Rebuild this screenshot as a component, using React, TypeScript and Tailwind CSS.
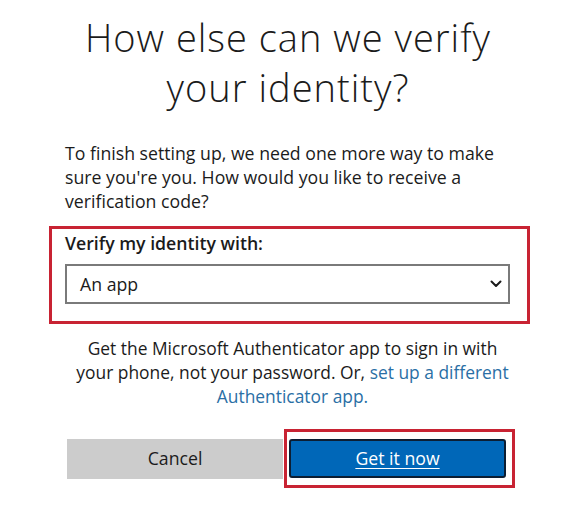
import React from 'react';

export default function App() {
  return (
    <div className="w-[585px] h-[517px] bg-white overflow-hidden font-['Open_Sans',sans-serif] text-[#1b1b1b]">
      <h1 className="pt-[12px] pr-[9px] text-center text-[38px] leading-[50px] font-light text-[#1b1b1b] tracking-[1px]">
        How else can we verify
        <br />
        your identity?
      </h1>

      <p className="mt-[29px] ml-[65px] w-[450px] text-[17.7px] leading-[24px] text-[#1b1b1b]">
        To finish setting up, we need one more way to make sure you're you. How would you like to receive a verification code?
      </p>

      {/* highlighted field */}
      <div className="mt-[13px] ml-[49px] w-[481px] h-[98px] border-[3px] border-[#c82333] pl-[13px] pr-[17px] pt-[2px]">
        <label className="block text-[17.7px] leading-[24px] font-semibold text-[#1b1b1b]">Verify my identity with:</label>
        <div className="mt-[9px] h-[40px] border-2 border-[#7a7a7a] flex items-center justify-between pl-[13px] pr-[6px]">
          <span className="text-[17.7px] text-[#1b1b1b]">An app</span>
          <svg width="12" height="8" viewBox="0 0 12 8" fill="none">
            <path d="M1.5 1.5 L6 6 L10.5 1.5" stroke="#1b1b1b" strokeWidth="2" strokeLinecap="round" strokeLinejoin="round" />
          </svg>
        </div>
      </div>

      <p className="mt-[12px] mx-auto w-[440px] text-center text-[17.4px] leading-[24px] text-[#1b1b1b]">
        Get the Microsoft Authenticator app to sign in with your phone, not your password. Or,{' '}
        <a className="text-[#2a6fa5]">set up a different Authenticator app.</a>
      </p>

      <div className="mt-[21px] ml-[67px] flex items-center">
        <button className="w-[216px] h-[40px] bg-[#cccccc] text-[17.7px] text-[#1b1b1b]">Cancel</button>
        <div className="ml-px border-[3px] border-[#c82333] px-[2px] py-[7px] pr-[6px]">
          <button className="w-[217px] h-[39px] bg-[#0067b8] border-2 border-[#0c1e33] rounded-[3px] text-[17.7px] text-white underline underline-offset-[3px]">
            Get it now
          </button>
        </div>
      </div>
    </div>
  );
}
